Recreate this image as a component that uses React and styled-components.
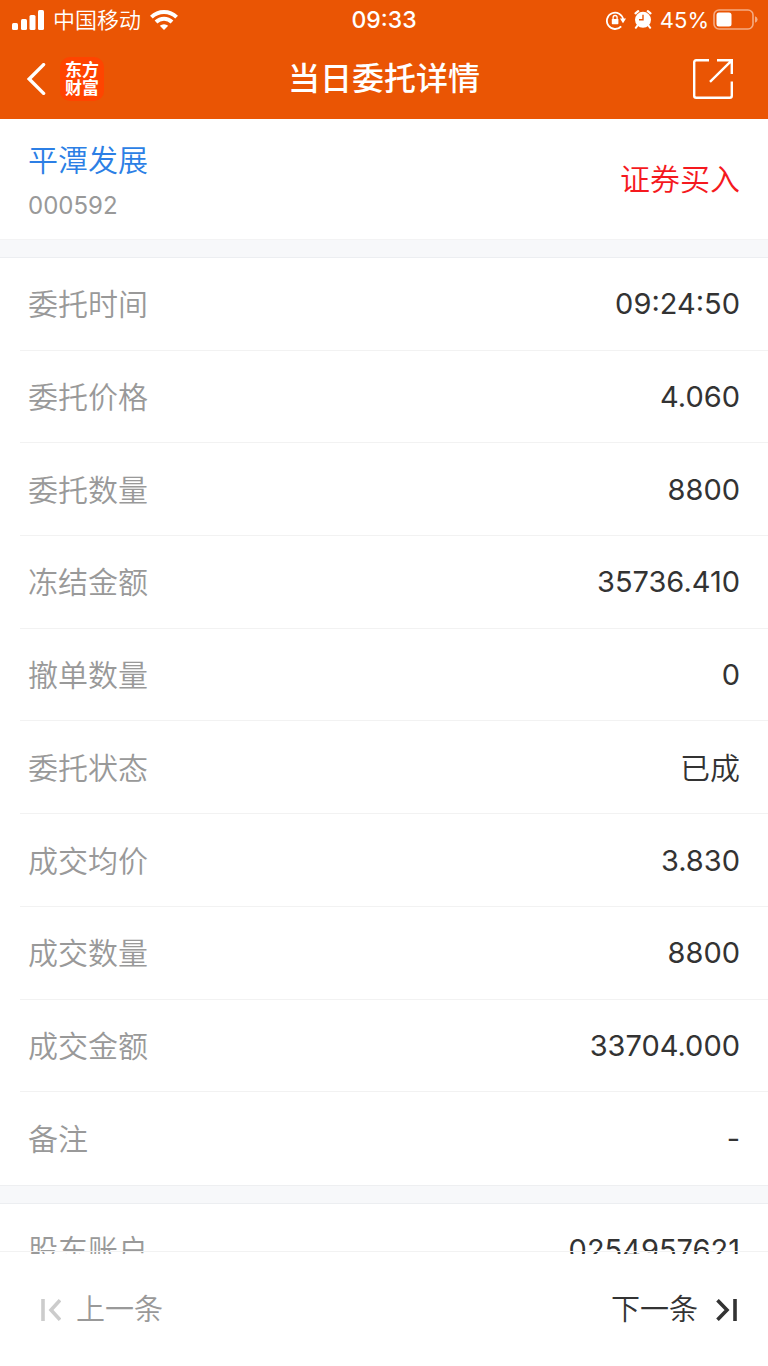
import React from "react";
import styled, { createGlobalStyle } from "styled-components";

const GlobalStyle = createGlobalStyle`
  * { box-sizing: border-box; }
  body {
    margin: 0;
    background: #fff;
    font-family: Inter, "Noto Sans CJK SC", sans-serif;
    color: #333;
  }
  button { font: inherit; color: inherit; background: none; border: 0; padding: 0; cursor: pointer; }
  svg { display: block; }
`;

const Page = styled.div`
  display: flex;
  flex-direction: column;
  height: 100vh;
`;

const Header = styled.header`
  flex: none;
  background: #ea5504;
  color: #fff;
`;

const Bar = styled.div`
  display: grid;
  grid-template-columns: 1fr auto 1fr;
  align-items: center;
  height: ${(p) => p.$height}px;
  padding: 0 ${(p) => p.$side}px;
`;

const Group = styled.div`
  display: flex;
  align-items: center;
  justify-content: ${(p) => (p.$end ? "flex-end" : "flex-start")};
  gap: ${(p) => p.$gap}px;
`;

const StatusText = styled.span`
  font-size: 22px;
  line-height: 32px;
`;

const Carrier = styled(StatusText)`
  font-weight: 350;
`;

const Clock = styled(StatusText)`
  font-size: 23px;
  font-weight: 500;
`;

const Title = styled.h1`
  margin: 0;
  font-size: 32px;
  line-height: 48px;
  font-weight: 500;
`;

const Logo = styled.a`
  display: block;
  width: 44px;
  height: 44px;
  padding: 3px 0;
  border-radius: 10px;
  background: #ff4400;
  color: #fff;
  font-family: "Noto Sans CJK SC", sans-serif;
  font-size: 17px;
  line-height: 18px;
  font-weight: 700;
  text-align: center;
  text-decoration: none;
`;

const ShareButton = styled.button`
  && { padding: 0 8px; }
`;

const Content = styled.main`
  flex: 1;
  min-height: 0;
  overflow-y: auto;
  scrollbar-width: none;
  background: #f7f8fa;
`;

const Stock = styled.section`
  display: flex;
  justify-content: space-between;
  align-items: center;
  height: 121px;
  padding: 0 28px;
  border-bottom: 1px solid #f3f3f4;
  background: #fff;
`;

const StockName = styled.h2`
  margin: 0;
  padding-top: 10px;
  font-size: 30px;
  line-height: 44px;
  font-weight: 350;
  color: #2c7fe5;
`;

const StockCode = styled.div`
  font-size: 24px;
  line-height: 48px;
  color: #999;
`;

const Side = styled.strong`
  font-size: 30px;
  line-height: 44px;
  font-weight: 350;
  color: #f5191e;
`;

const Details = styled.dl`
  display: grid;
  grid-auto-rows: minmax(90px, 1fr);
  min-height: ${(p) => p.$minHeight}px;
  margin: 17px 0 0;
  border-top: 1px solid #eceef1;
  border-bottom: 1px solid #eeeff1;
  background: #fff;
`;

const Row = styled.div`
  display: flex;
  justify-content: space-between;
  align-items: center;
  margin-left: 20px;
  padding: 1px 28px 0 8px;
  border-bottom: 1px solid #f2f2f2;
  line-height: 44px;

  &:last-child { border-bottom: 0; }
`;

const Label = styled.dt`
  color: #999;
  font-size: 30px;
  font-weight: 350;
`;

const Value = styled.dd`
  margin: 0;
  font-size: ${(p) => (p.$text ? 30 : 29)}px;
  font-weight: ${(p) => (p.$text ? 350 : 400)};
`;

const Footer = styled.footer`
  position: relative;
  flex: none;
  display: flex;
  justify-content: space-between;
  align-items: center;
  height: 112px;
  padding: 0 30px 0 39px;
  background: #fff;

  &::before {
    content: "";
    position: absolute;
    top: -3px;
    left: 0;
    right: 0;
    height: 1px;
    background: #f2f2f2;
  }
`;

const Step = styled.button`
  && {
    display: flex;
    align-items: center;
    gap: ${(p) => p.$gap}px;
    font-size: 29px;
    line-height: 44px;
    font-weight: 350;
    color: #333;
  }

  &&:disabled { color: #999; }
`;

const Signal = () => (
  <svg width="34" height="20" viewBox="-2 0 34 20" fill="#fff" aria-hidden="true">
    <rect x="0" y="13" width="6" height="7" rx="1.5" />
    <rect x="9" y="9" width="6" height="11" rx="1.5" />
    <rect x="17.5" y="5" width="6" height="15" rx="1.5" />
    <rect x="26" y="0" width="6" height="20" rx="1.5" />
  </svg>
);

const Wifi = () => (
  <svg width="28" height="20" viewBox="0 0 28 20" aria-hidden="true">
    <g fill="none" stroke="#fff" strokeWidth="3.9">
      <path d="M1.4 7.2a18 18 0 0 1 25.2 0" />
      <path d="M6 12a11.4 11.4 0 0 1 16 0" />
    </g>
    <path d="M14 20l-4.2-4.2a6.2 6.2 0 0 1 8.4 0z" fill="#fff" />
  </svg>
);

const RotationLock = () => (
  <svg width="20" height="20" viewBox="0 0 20 20" aria-hidden="true">
    <path d="M15.2 16.3A8.2 8.2 0 1 1 17.2 9.5" fill="none" stroke="#fff" strokeWidth="1.8" />
    <path d="M14 8.6h6l-3 4.6z" fill="#fff" />
    <rect x="5.8" y="8.9" width="6.6" height="5.4" rx=".7" fill="#fff" />
    <path d="M7.1 9.4V7.5a2 2 0 0 1 4 0v1.9" fill="none" stroke="#fff" strokeWidth="1.3" />
  </svg>
);

const Alarm = () => (
  <svg width="18" height="19" viewBox="0 0 18 19" aria-hidden="true">
    <circle cx="9" cy="9.8" r="8" fill="#fff" />
    <path d="M1.5 3.4L4.2 1.2M16.5 3.4L13.8 1.2" stroke="#fff" strokeWidth="2.2" strokeLinecap="round" />
    <path d="M3.6 15.4L1.8 17.8M14.4 15.4L16.2 17.8" stroke="#fff" strokeWidth="2" strokeLinecap="round" />
    <path d="M9 4.8v5H5" fill="none" stroke="#ea5504" strokeWidth="1.4" />
  </svg>
);

const Battery = () => (
  <svg width="45" height="21" viewBox="0 0 45 21" aria-hidden="true">
    <rect x="1" y="1" width="39" height="19" rx="5" fill="none" stroke="#fff" strokeOpacity=".5" strokeWidth="1.6" />
    <rect x="3.5" y="3.5" width="15" height="14" rx="2.5" fill="#fff" />
    <path d="M42 7.2q2.6 1 2.6 3.3T42 13.8z" fill="#fff" fillOpacity=".5" />
  </svg>
);

const Back = () => (
  <svg width="20" height="32" viewBox="0 0 20 32" fill="none" stroke="#fff" strokeWidth="3.4" aria-hidden="true">
    <path d="M16.6 1.6L2.2 16l14.4 14.4" strokeLinecap="round" />
  </svg>
);

const Share = () => (
  <svg width="40" height="40" viewBox="0 0 40 40" fill="none" stroke="#fff" strokeWidth="2.4" aria-hidden="true">
    <path d="M16 1.3H3.2q-2 0-2 2v33.4q0 2 2 2h33.6q2 0 2-2V22.5" />
    <path d="M24 1.3h14.8V15M38.3 1.8L17 22.8" />
  </svg>
);

const First = () => (
  <svg width="22" height="22" viewBox="0 0 22 22" fill="none" stroke="#ccc" strokeWidth="3.6" aria-hidden="true">
    <path d="M4 0v22M21 1.2L12 11l9 9.8" />
  </svg>
);

const Last = () => (
  <svg width="22" height="22" viewBox="0 0 22 22" fill="none" stroke="#333" strokeWidth="3.6" aria-hidden="true">
    <path d="M19 0v22M1.5 1.2L11 11l-9.5 9.8" />
  </svg>
);

const order = [
  ["委托时间", "09:24:50"],
  ["委托价格", "4.060"],
  ["委托数量", "8800"],
  ["冻结金额", "35736.410"],
  ["撤单数量", "0"],
  ["委托状态", "已成", true],
  ["成交均价", "3.830"],
  ["成交数量", "8800"],
  ["成交金额", "33704.000"],
  ["备注", "-"],
];

const account = [["股东账户", "0254957621"]];

const DetailList = ({ items, minHeight = 0 }) => (
  <Details $minHeight={minHeight}>
    {items.map(([label, value, text]) => (
      <Row key={label}>
        <Label>{label}</Label>
        <Value $text={text}>{value}</Value>
      </Row>
    ))}
  </Details>
);

export default function App() {
  return (
    <>
      <GlobalStyle />
      <Page>
        <Header>
          <Bar $height={39} $side={10}>
            <Group $gap={9}>
              <Signal />
              <Carrier>中国移动</Carrier>
              <Wifi />
            </Group>
            <Clock>09:33</Clock>
            <Group $end $gap={8}>
              <RotationLock />
              <Alarm />
              <Group $gap={4}>
                <StatusText>45%</StatusText>
                <Battery />
              </Group>
            </Group>
          </Bar>
          <Bar $height={80} $side={27}>
            <Group $gap={13}>
              <button type="button" aria-label="返回"><Back /></button>
              <Logo href="#home">东方<br />财富</Logo>
            </Group>
            <Title>当日委托详情</Title>
            <Group $end $gap={0}>
              <ShareButton type="button" aria-label="分享"><Share /></ShareButton>
            </Group>
          </Bar>
        </Header>
        <Content>
          <Stock>
            <div>
              <StockName>平潭发展</StockName>
              <StockCode>000592</StockCode>
            </div>
            <Side>证券买入</Side>
          </Stock>
          <DetailList items={order} minHeight={929} />
          <DetailList items={account} />
        </Content>
        <Footer>
          <Step type="button" $gap={15} disabled><First />上一条</Step>
          <Step type="button" $gap={18}>下一条<Last /></Step>
        </Footer>
      </Page>
    </>
  );
}
